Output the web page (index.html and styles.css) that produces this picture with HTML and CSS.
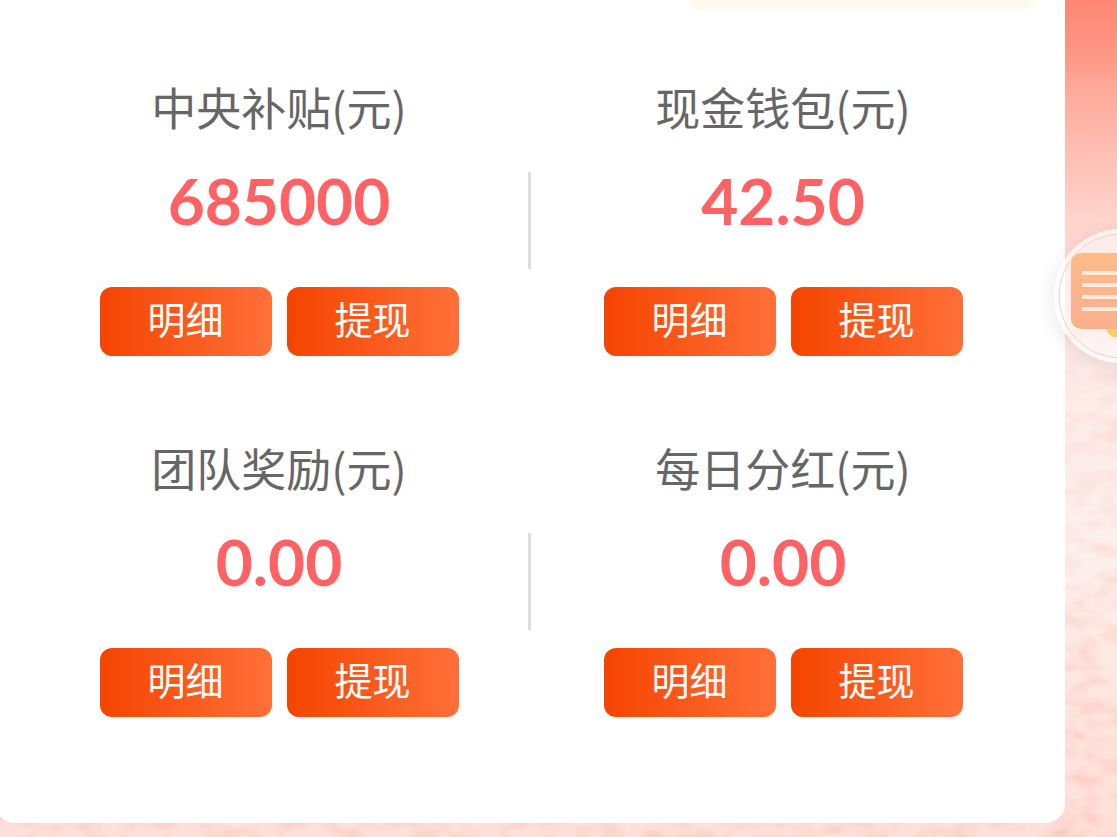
FILE: index.html
```
<!DOCTYPE html>
<html lang="zh-CN">
<head>
    <meta charset="UTF-8">
    <meta name="viewport" content="width=device-width, initial-scale=1.0">
    <title>我的钱包</title>
    <link rel="stylesheet" href="styles.css">
</head>
<body>

<div class="page">
    <!-- Woven paper texture -->
    <svg class="texture" aria-hidden="true">
        <filter id="weave" x="0" y="0" width="100%" height="100%">
            <feTurbulence type="fractalNoise" baseFrequency="0.04 0.07" numOctaves="2" seed="4"/>
            <feColorMatrix values="0 0 0 0 0.96  0 0 0 0 0.55  0 0 0 0 0.48  2.2 0 0 0 -0.9"/>
        </filter>
        <rect width="100%" height="100%" filter="url(#weave)"/>
    </svg>

    <main class="card">
        <div class="notice"></div>

        <div class="wallets">
            <section class="wallet">
                <div class="wallet-body">
                    <h2>中央补贴(元)</h2>
                    <p class="amount">685000</p>
                    <div class="actions">
                        <button type="button">明细</button>
                        <button type="button">提现</button>
                    </div>
                </div>
                <div class="divider"></div>
            </section>

            <section class="wallet">
                <div class="wallet-body">
                    <h2>现金钱包(元)</h2>
                    <p class="amount">42.50</p>
                    <div class="actions">
                        <button type="button">明细</button>
                        <button type="button">提现</button>
                    </div>
                </div>
            </section>

            <section class="wallet">
                <div class="wallet-body">
                    <h2>团队奖励(元)</h2>
                    <p class="amount">0.00</p>
                    <div class="actions">
                        <button type="button">明细</button>
                        <button type="button">提现</button>
                    </div>
                </div>
                <div class="divider"></div>
            </section>

            <section class="wallet">
                <div class="wallet-body">
                    <h2>每日分红(元)</h2>
                    <p class="amount">0.00</p>
                    <div class="actions">
                        <button type="button">明细</button>
                        <button type="button">提现</button>
                    </div>
                </div>
            </section>
        </div>
    </main>

    <!-- Floating shortcut -->
    <button type="button" class="float-btn" aria-label="消息">
        <svg viewBox="0 0 134 134">
            <defs>
                <linearGradient id="doc" x1="0" y1="0" x2="0" y2="1">
                    <stop offset="0" stop-color="#fdbb8a"/>
                    <stop offset="1" stop-color="#fbae8c"/>
                </linearGradient>
            </defs>
            <circle cx="67" cy="67" r="62" fill="none" stroke="#e4d3d0" stroke-width="1"/>
            <circle cx="64" cy="97" r="12" fill="#f7cf62"/>
            <rect x="17" y="24" width="100" height="76" rx="10" fill="url(#doc)"/>
            <path d="M28 44h78M28 56h78M28 68h78M28 80h78" stroke="#ffeadb" stroke-width="4"/>
        </svg>
    </button>
</div>

</body>
</html>
```
FILE: styles.css
```
* {
    box-sizing: border-box;
}
body {
    margin: 0;
    font-family: "Noto Sans CJK SC", sans-serif;
}
.page {
    position: relative;
    min-height: 100vh;
    padding-bottom: 14px;
    overflow: hidden;
    background: linear-gradient(#ff8774 0, #ff9482 50px, #ffa999 90px, #ffbdb2 150px, #ffd5cd 220px, #fdeae6 350px, #fdf0ec 560px, #fee5df 700px, #fee0da 837px);
}
.texture {
    position: absolute;
    top: 0;
    left: 0;
    width: 100%;
    height: 100%;
    opacity: 0.7;
    -webkit-mask-image: linear-gradient(transparent 60px, rgba(0, 0, 0, 0.5) 250px, rgba(0, 0, 0, 0.5) 500px, #000 700px);
    mask-image: linear-gradient(transparent 60px, rgba(0, 0, 0, 0.5) 250px, rgba(0, 0, 0, 0.5) 500px, #000 700px);
}
.card {
    position: relative;
    margin: 0 52px 0 -5px;
    padding: 0 30px 61px 32px;
    background: #fff;
    border-radius: 0 0 20px 20px;
}
.notice {
    width: 346px;
    height: 9px;
    margin-left: auto;
    margin-bottom: 31px;
    background: #fffaec;
    border-radius: 0 0 20px 20px;
}
.wallets {
    display: grid;
    grid-template-columns: 1fr 1fr;
}
.wallet {
    display: flex;
    align-items: center;
}
.wallet-body {
    flex: 1;
    padding: 40px 0 45px;
    text-align: center;
}
h2 {
    margin: 0 0 31px;
    color: #666;
    font-size: 45px;
    font-weight: 400;
    line-height: 54px;
}
.amount {
    margin: 0 0 50px;
    color: #ff6265;
    font-family: Lato, "Noto Sans CJK SC", sans-serif;
    font-size: 64px;
    font-weight: 700;
    line-height: 72px;
}
.actions {
    display: flex;
    justify-content: center;
    gap: 15px;
}
.actions button {
    width: 172px;
    height: 69px;
    padding: 0 0 8px;
    border: none;
    border-radius: 12px;
    color: #fff;
    font-family: inherit;
    font-size: 38px;
    line-height: 60px;
    background: linear-gradient(90deg, #f54400, #ff7038);
    cursor: pointer;
}
.divider {
    width: 3px;
    height: 97px;
    margin-left: -3px;
    background: #ddd;
}
.float-btn {
    position: absolute;
    top: 229px;
    right: -71px;
    width: 134px;
    height: 134px;
    padding: 0;
    border: none;
    border-radius: 50%;
    background: rgba(255, 255, 255, 0.5);
    box-shadow: inset 0 0 0 5px rgba(255, 255, 255, 0.3), 0 4px 20px rgba(0, 0, 0, 0.1);
    cursor: pointer;
}
.float-btn svg {
    display: block;
    width: 100%;
    height: 100%;
}
```
